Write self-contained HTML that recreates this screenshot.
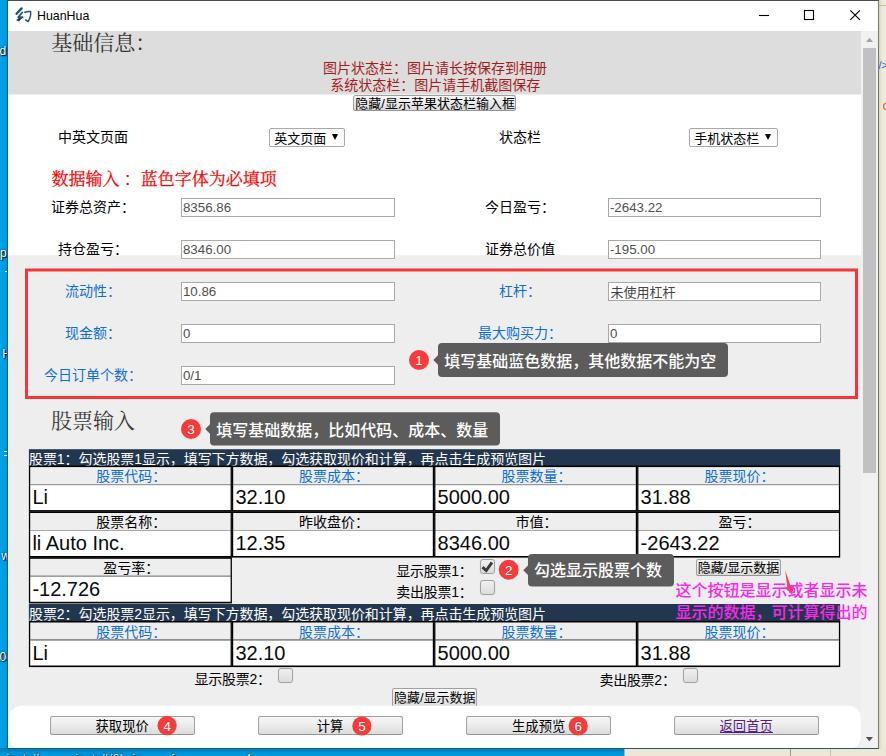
<!DOCTYPE html>
<html lang="zh-CN"><head><meta charset="utf-8"><title>HuanHua</title><style>
html,body{margin:0;padding:0;background:#009ee5}
body{width:886px;height:756px;overflow:hidden;position:relative;font-family:"Liberation Sans",sans-serif}
#page{position:absolute;left:0;top:0;width:886px;height:756px;overflow:hidden}
#page>div,#page>svg{position:absolute}
svg{display:block;overflow:visible}
svg.bar{overflow:hidden}
.title{font-size:12.4px;color:#000;line-height:14px;white-space:nowrap}
.dl{font-size:12px;color:#fff;text-shadow:1px 1px 1px #001,0 0 2px #013;white-space:nowrap;line-height:14px}
.rt{font-size:11px;line-height:12px;width:8px;overflow:hidden;white-space:nowrap}
.bl{font-size:11.5px;line-height:12px;color:#eef;white-space:nowrap;letter-spacing:.55px;text-shadow:1px 1px 1px #001,0 0 2px #013}
.btn{box-sizing:border-box;border:1px solid #a0a0a0;border-bottom-color:#949494;border-radius:2.5px;background:linear-gradient(#f7f7f7,#ececec 45%,#dcdcdc)}
.sel{box-sizing:border-box;border:1px solid #a9a9a9;border-radius:2px;background:#fff}
.inp{box-sizing:border-box;border:1px solid #a9a9a9;background:#fff;font-size:13.33px;line-height:16px;color:#505050;padding:0.7px 0 0 0.9px;white-space:nowrap;overflow:hidden}
.big{font-size:20px;line-height:23px;color:#0a0a0a;white-space:nowrap}
.cb{box-sizing:border-box;border:1px solid #a2a2a2;border-radius:3px;background:linear-gradient(#f0f0f0,#dcdcdc);box-shadow:0 0 1px rgba(0,0,0,.18)}
.bn{width:20px;text-align:center;color:#fff;font-size:12.5px;line-height:15px}
svg.t text{font-family:"Liberation Sans","Noto Sans CJK SC",sans-serif;white-space:pre}
svg.t.sf text{font-family:"Liberation Serif","Noto Serif CJK SC",serif}
svg.t.md text{font-weight:500}
</style></head><body>
<div id="page">
<div class="desk" style="left:0px;top:0px;width:886px;height:756px;background:#009ee5"></div>
<div style="left:0px;top:0px;width:8px;height:756px;background:linear-gradient(90deg,#00a2e8 0,#009de2 70%,#0088c8 100%)"></div>
<div class="dl" style="left:-0.6px;top:44px">d</div><div class="dl" style="left:0;top:245.6px">p</div><div class="dl" style="left:2.2px;top:347px">H</div><div class="dl" style="left:1.2px;top:548.8px">w</div><div class="dl" style="left:-0.4px;top:649.8px">0c</div>
<div style="left:3.5px;top:451px;width:5px;height:1.2px;background:#fff"></div>
<div style="left:3.5px;top:455px;width:5px;height:1.2px;background:#fff"></div>
<div style="left:5px;top:271px;width:3px;height:1.2px;background:#fff"></div>
<div style="left:879px;top:0px;width:7px;height:756px;background:linear-gradient(90deg,#d9d3bd 0,#ece7d6 40%,#f0ecdf 100%)"></div>
<div style="left:624px;top:749px;width:262px;height:7px;background:#ece7d6;border-left:1px solid #b5b09c"></div>
<div style="left:790px;top:749px;width:1px;height:7px;background:#9d9a8c"></div>
<div style="left:830px;top:749px;width:1px;height:7px;background:#c9c5b4"></div>
<div style="left:879px;top:5px;width:7px;height:1px;background:#c9b98a"></div>
<div class="rt" style="left:878.4px;top:59px;color:#2a62c9">/&gt;</div><div class="rt" style="left:882.6px;top:100px;color:#d9531e;font-size:13px">c</div>
<div style="left:0px;top:748px;width:624px;height:8px;background:linear-gradient(#0079b8,#0092d6 60%,#009be0)"></div>
<div class="bl" style="left:6.4px;top:751.6px">install</div><div class="bl" style="left:75.4px;top:751.6px">install(2)</div><div class="bl" style="left:132.4px;top:751.6px">in</div><div class="bl" style="left:171px;top:751.6px">f</div><div class="bl" style="left:245px;top:751.6px">4</div>
<div class="win" style="left:7px;top:0px;width:872px;height:749px;background:#fff;box-sizing:border-box;border:1px solid #5a6b75;border-top-color:#4f4f4f;border-right-color:#767676;border-left-color:#1f5f82;border-bottom-color:#23566f"></div>
<div class="titlebar" style="left:8px;top:1px;width:870px;height:30px;background:#fff"></div>
<svg class="s icon" style="left:14px;top:6px" width="20" height="18" viewBox="14 6 20 18" role="img"><title>幻</title><g fill="none" stroke-linecap="round" stroke-linejoin="round"><path d="M21.6 8.4L16.6 13.8" stroke="#17566f" stroke-width="2.3"/><path d="M22.4 12.3L18.2 17.3L22.6 17.2L17.4 20" stroke="#1b4a86" stroke-width="1.7"/><path d="M18.6 20.3L19.6 19.4" stroke="#15307a" stroke-width="2"/><path d="M24.8 12.3Q28 11.2 30.6 11.5Q31.2 15 29.6 18.6Q29 20.4 28 21.6L25.6 19.9" stroke="#1c4f94" stroke-width="1.45"/></g></svg>
<div class="title" style="left:37px;top:9.3px">HuanHua</div>
<svg class="s ctl" style="left:750px;top:5px" width="125" height="22" viewBox="750 5 125 22"><path d="M759 15.5h10" stroke="#000" stroke-width="1.1" fill="none"/><rect x="804.5" y="10.5" width="9" height="9" stroke="#000" stroke-width="1.1" fill="none"/><path d="M850.3 10.3l9.6 9.6M859.9 10.3l-9.6 9.6" stroke="#000" stroke-width="1.15" fill="none"/></svg>
<div class="content" style="left:8px;top:31px;width:853px;height:717px;background:#eeeeee"></div>
<div class="band" style="left:8px;top:31px;width:853px;height:63.6px;background:#dddddd"></div>
<svg class="s" style="left:8px;top:31px" width="853" height="717" viewBox="8 31 853 717"><rect x="8" y="31" width="853" height="63.5" fill="#dddddd"/><rect x="8" y="94.5" width="853" height="160.8" fill="#fff"/></svg>
<div class="sbar" style="left:861px;top:31px;width:17px;height:717px;background:#f1f1f1"></div>
<svg class="s" style="left:861px;top:31px" width="17" height="717" viewBox="861 31 17 717"><rect x="863" y="48" width="13" height="425" fill="#c1c1c1"/><path d="M866 42l3.5 -4.2l3.5 4.2z" fill="#a3a3a3"/><path d="M865.8 737l3.6 4.2l3.6 -4.2z" fill="#505050"/></svg>
<svg class="t sf" style="left:51px;top:30px;" width="107" height="29"><text x="0.3" y="20.1" font-size="21" fill="#333">基础信息：</text></svg>
<svg class="t" style="left:323px;top:59px;" width="226" height="20"><text x="0" y="13.97" font-size="14" fill="#a31c1c">图片状态栏：图片请长按保存到相册</text></svg>
<svg class="t" style="left:330px;top:76px;" width="212" height="20"><text x="0.2" y="13.97" font-size="14" fill="#a31c1c">系统状态栏：图片请手机截图保存</text></svg>
<div class="btn" style="left:353.3px;top:94.6px;width:162.5px;height:16.8px;"></div>
<svg class="t" style="left:355px;top:95px;" width="161" height="18"><text x="0.3" y="12.8" font-size="13" fill="#000">隐藏/显示苹果状态栏输入框</text></svg>
<svg class="t" style="left:58px;top:128px;" width="72" height="20"><text x="0.1" y="13.77" font-size="14" fill="#000">中英文页面</text></svg>
<div class="sel" style="left:269px;top:128px;width:76px;height:19px;"></div>
<svg class="t" style="left:274px;top:130px;" width="54" height="18"><text x="0.2" y="12.75" font-size="13" fill="#000">英文页面</text></svg>
<svg class="s" style="left:331px;top:132px" width="10" height="10" viewBox="331 132 10 10"><path d="M331.9 134.1h6.2l-3.1 5.8z" fill="#000"/></svg>
<svg class="t" style="left:499px;top:128px;" width="44" height="20"><text x="0.1" y="13.77" font-size="14" fill="#000">状态栏</text></svg>
<div class="sel" style="left:689px;top:128px;width:89px;height:19px;"></div>
<svg class="t" style="left:694px;top:130px;" width="67" height="18"><text x="0.2" y="12.75" font-size="13" fill="#000">手机状态栏</text></svg>
<svg class="s" style="left:764px;top:132px" width="10" height="10" viewBox="764 132 10 10"><path d="M764.9 134.1h6.2l-3.1 5.8z" fill="#000"/></svg>
<svg class="t sf" style="left:51px;top:168px;" width="228" height="24"><text x="0.6" y="16.6" font-size="17" fill="#ff0000" stroke="#ff0000" stroke-width="0.25">数据输入 ：蓝色字体为必填项</text></svg>
<svg class="t" style="left:51px;top:198px;" width="86" height="20"><text x="0.1" y="13.77" font-size="14" fill="#000">证券总资产：</text></svg>
<div class="inp" style="left:181px;top:198px;width:214px;height:18.6px;">8356.86</div>
<svg class="t" style="left:485px;top:198px;" width="72" height="20"><text x="0.1" y="13.77" font-size="14" fill="#000">今日盈亏：</text></svg>
<div class="inp" style="left:608px;top:198px;width:213px;height:18.6px;">-2643.22</div>
<svg class="t" style="left:58px;top:240px;" width="72" height="20"><text x="0.1" y="13.77" font-size="14" fill="#000">持仓盈亏：</text></svg>
<div class="inp" style="left:181px;top:240px;width:214px;height:18.6px;">8346.00</div>
<svg class="t" style="left:485px;top:240px;" width="72" height="20"><text x="0.1" y="13.77" font-size="14" fill="#000">证券总价值</text></svg>
<div class="inp" style="left:608px;top:240px;width:213px;height:18.6px;">-195.00</div>
<svg class="t" style="left:65px;top:282px;" width="58" height="20"><text x="0.1" y="13.77" font-size="14" fill="#0d6edb">流动性：</text></svg>
<div class="inp" style="left:181px;top:282px;width:214px;height:18.6px;">10.86</div>
<svg class="t" style="left:499px;top:282px;" width="44" height="20"><text x="0.1" y="13.77" font-size="14" fill="#0d6edb">杠杆：</text></svg>
<div class="inp" style="left:608px;top:282px;width:213px;height:18.6px;"></div>
<svg class="t" style="left:610px;top:284px;" width="67" height="18"><text x="0.6" y="12.65" font-size="13" fill="#444">未使用杠杆</text></svg>
<svg class="t" style="left:65px;top:324px;" width="58" height="20"><text x="0.1" y="13.77" font-size="14" fill="#0d6edb">现金额：</text></svg>
<div class="inp" style="left:181px;top:324px;width:214px;height:18.6px;">0</div>
<svg class="t" style="left:478px;top:324px;" width="86" height="20"><text x="0.1" y="13.77" font-size="14" fill="#0d6edb">最大购买力：</text></svg>
<div class="inp" style="left:608px;top:324px;width:213px;height:18.6px;">0</div>
<svg class="t" style="left:44px;top:366px;" width="100" height="20"><text x="0.1" y="13.77" font-size="14" fill="#0d6edb">今日订单个数：</text></svg>
<div class="inp" style="left:181px;top:366px;width:214px;height:18.6px;">0/1</div>
<svg class="s hl" style="left:24px;top:267px" width="836" height="134" viewBox="24 267 836 134"><rect x="26.5" y="270" width="830" height="127.5" fill="none" stroke="#f53636" stroke-width="3"/></svg>
<svg class="t sf" style="left:50px;top:407px;" width="86" height="29"><text x="0.9" y="20.5" font-size="21" fill="#3a3a3a">股票输入</text></svg>
<svg class="s nav" style="left:28px;top:448px" width="813" height="19" viewBox="28 448 813 19"><rect x="28.9" y="449.2" width="811.3" height="17.6" fill="#22374f"/></svg>
<svg class="t" style="left:29px;top:450px;" width="520" height="20"><text x="0" y="13.97" font-size="14" fill="#fff" textLength="517" lengthAdjust="spacing">股票1：勾选股票1显示，填写下方数据，勾选获取现价和计算，再点击生成预览图片</text></svg>
<svg class="s cell" style="left:27px;top:464px" width="206" height="49" viewBox="27 464 206 49"><rect x="28.9" y="465.5" width="203" height="46.2" fill="#000"/><rect x="30.2" y="467.1" width="200.4" height="17" fill="#eeeeee"/><rect x="30.2" y="484.1" width="200.4" height="1" fill="#a9a9a9"/><rect x="30.2" y="485.1" width="200.4" height="25" fill="#fff"/></svg>
<svg class="t" style="left:96px;top:468px;" width="72" height="20"><text x="0.3" y="13.47" font-size="14" fill="#0d6edb">股票代码：</text></svg>
<div class="big" style="left:32.4px;top:486.1px">Li</div>
<svg class="s cell" style="left:230px;top:464px" width="206" height="49" viewBox="230 464 206 49"><rect x="231.9" y="465.5" width="202.2" height="46.2" fill="#000"/><rect x="233.2" y="467.1" width="199.6" height="17" fill="#eeeeee"/><rect x="233.2" y="484.1" width="199.6" height="1" fill="#a9a9a9"/><rect x="233.2" y="485.1" width="199.6" height="25" fill="#fff"/></svg>
<svg class="t" style="left:298px;top:468px;" width="72" height="20"><text x="0.9" y="13.47" font-size="14" fill="#0d6edb">股票成本：</text></svg>
<div class="big" style="left:235.4px;top:486.1px">32.10</div>
<svg class="s cell" style="left:433px;top:464px" width="206" height="49" viewBox="433 464 206 49"><rect x="434.1" y="465.5" width="203" height="46.2" fill="#000"/><rect x="435.4" y="467.1" width="200.4" height="17" fill="#eeeeee"/><rect x="435.4" y="484.1" width="200.4" height="1" fill="#a9a9a9"/><rect x="435.4" y="485.1" width="200.4" height="25" fill="#fff"/></svg>
<svg class="t" style="left:501px;top:468px;" width="72" height="20"><text x="0.5" y="13.47" font-size="14" fill="#0d6edb">股票数量：</text></svg>
<div class="big" style="left:437.6px;top:486.1px">5000.00</div>
<svg class="s cell" style="left:636px;top:464px" width="206" height="49" viewBox="636 464 206 49"><rect x="637.1" y="465.5" width="203.1" height="46.2" fill="#000"/><rect x="638.4" y="467.1" width="200.5" height="17" fill="#eeeeee"/><rect x="638.4" y="484.1" width="200.5" height="1" fill="#a9a9a9"/><rect x="638.4" y="485.1" width="200.5" height="25" fill="#fff"/></svg>
<svg class="t" style="left:704px;top:468px;" width="72" height="20"><text x="0.55" y="13.47" font-size="14" fill="#0d6edb">股票现价：</text></svg>
<div class="big" style="left:640.6px;top:486.1px">31.88</div>
<svg class="s cell" style="left:27px;top:510px" width="206" height="49" viewBox="27 510 206 49"><rect x="28.9" y="511.4" width="203" height="46.2" fill="#000"/><rect x="30.2" y="513" width="200.4" height="17" fill="#eeeeee"/><rect x="30.2" y="530" width="200.4" height="1" fill="#a9a9a9"/><rect x="30.2" y="531" width="200.4" height="25" fill="#fff"/></svg>
<svg class="t" style="left:96px;top:514px;" width="72" height="20"><text x="0.3" y="13.37" font-size="14" fill="#000">股票名称：</text></svg>
<div class="big" style="left:32.4px;top:532px">li Auto Inc.</div>
<svg class="s cell" style="left:230px;top:510px" width="206" height="49" viewBox="230 510 206 49"><rect x="231.9" y="511.4" width="202.2" height="46.2" fill="#000"/><rect x="233.2" y="513" width="199.6" height="17" fill="#eeeeee"/><rect x="233.2" y="530" width="199.6" height="1" fill="#a9a9a9"/><rect x="233.2" y="531" width="199.6" height="25" fill="#fff"/></svg>
<svg class="t" style="left:298px;top:514px;" width="72" height="20"><text x="0.9" y="13.37" font-size="14" fill="#000">昨收盘价：</text></svg>
<div class="big" style="left:235.4px;top:532px">12.35</div>
<svg class="s cell" style="left:433px;top:510px" width="206" height="49" viewBox="433 510 206 49"><rect x="434.1" y="511.4" width="203" height="46.2" fill="#000"/><rect x="435.4" y="513" width="200.4" height="17" fill="#eeeeee"/><rect x="435.4" y="530" width="200.4" height="1" fill="#a9a9a9"/><rect x="435.4" y="531" width="200.4" height="25" fill="#fff"/></svg>
<svg class="t" style="left:515px;top:514px;" width="44" height="20"><text x="0.5" y="13.37" font-size="14" fill="#000">市值：</text></svg>
<div class="big" style="left:437.6px;top:532px">8346.00</div>
<svg class="s cell" style="left:636px;top:510px" width="206" height="49" viewBox="636 510 206 49"><rect x="637.1" y="511.4" width="203.1" height="46.2" fill="#000"/><rect x="638.4" y="513" width="200.5" height="17" fill="#eeeeee"/><rect x="638.4" y="530" width="200.5" height="1" fill="#a9a9a9"/><rect x="638.4" y="531" width="200.5" height="25" fill="#fff"/></svg>
<svg class="t" style="left:718px;top:514px;" width="44" height="20"><text x="0.55" y="13.37" font-size="14" fill="#000">盈亏：</text></svg>
<div class="big" style="left:640.6px;top:532px">-2643.22</div>
<svg class="s cell" style="left:27px;top:556px" width="206" height="49" viewBox="27 556 206 49"><rect x="28.9" y="557.2" width="203" height="46.2" fill="#000"/><rect x="30.2" y="558.8" width="200.4" height="17" fill="#eeeeee"/><rect x="30.2" y="575.8" width="200.4" height="1" fill="#a9a9a9"/><rect x="30.2" y="576.8" width="200.4" height="25" fill="#fff"/></svg>
<svg class="t" style="left:103px;top:559px;" width="58" height="20"><text x="0.3" y="14.17" font-size="14" fill="#000">盈亏率：</text></svg>
<div class="big" style="left:32.4px;top:577.8px">-12.726</div>
<svg class="t" style="left:396px;top:562px;" width="79" height="20"><text x="0.2" y="13.77" font-size="14" fill="#000" textLength="76.5" lengthAdjust="spacing">显示股票1：</text></svg>
<div class="cb" style="left:480px;top:559px;width:15px;height:15px;"></div>
<svg class="s" style="left:480px;top:559px" width="16" height="16" viewBox="480 559 16 16"><path d="M482.5 567.1l3.7 3.4l5.8 -8.1" fill="none" stroke="#3a3a3a" stroke-width="2.9"/></svg>
<svg class="t" style="left:396px;top:583px;" width="79" height="20"><text x="0.2" y="14.17" font-size="14" fill="#000" textLength="76.5" lengthAdjust="spacing">卖出股票1：</text></svg>
<div class="cb" style="left:480px;top:580px;width:15px;height:15px;"></div>
<div class="btn" style="left:696px;top:558.9px;width:84.8px;height:17.2px;"></div>
<svg class="t" style="left:697px;top:560px;" width="83" height="18"><text x="0.7" y="12.4" font-size="13" fill="#000">隐藏/显示数据</text></svg>
<svg class="s nav" style="left:28px;top:603px" width="813" height="19" viewBox="28 603 813 19"><rect x="28.9" y="604" width="811.3" height="18" fill="#22374f"/></svg>
<svg class="t" style="left:29px;top:605px;" width="520" height="20"><text x="0" y="13.77" font-size="14" fill="#fff" textLength="517" lengthAdjust="spacing">股票2：勾选股票2显示，填写下方数据，勾选获取现价和计算，再点击生成预览图片</text></svg>
<svg class="s cell" style="left:27px;top:619px" width="206" height="50" viewBox="27 619 206 50"><rect x="28.9" y="620.9" width="203" height="46.2" fill="#000"/><rect x="30.2" y="622.5" width="200.4" height="17" fill="#eeeeee"/><rect x="30.2" y="639.5" width="200.4" height="1" fill="#a9a9a9"/><rect x="30.2" y="640.5" width="200.4" height="25" fill="#fff"/></svg>
<svg class="t" style="left:96px;top:623px;" width="72" height="20"><text x="0.3" y="13.87" font-size="14" fill="#0d6edb">股票代码：</text></svg>
<div class="big" style="left:32.4px;top:641.5px">Li</div>
<svg class="s cell" style="left:230px;top:619px" width="206" height="50" viewBox="230 619 206 50"><rect x="231.9" y="620.9" width="202.2" height="46.2" fill="#000"/><rect x="233.2" y="622.5" width="199.6" height="17" fill="#eeeeee"/><rect x="233.2" y="639.5" width="199.6" height="1" fill="#a9a9a9"/><rect x="233.2" y="640.5" width="199.6" height="25" fill="#fff"/></svg>
<svg class="t" style="left:298px;top:623px;" width="72" height="20"><text x="0.9" y="13.87" font-size="14" fill="#0d6edb">股票成本：</text></svg>
<div class="big" style="left:235.4px;top:641.5px">32.10</div>
<svg class="s cell" style="left:433px;top:619px" width="206" height="50" viewBox="433 619 206 50"><rect x="434.1" y="620.9" width="203" height="46.2" fill="#000"/><rect x="435.4" y="622.5" width="200.4" height="17" fill="#eeeeee"/><rect x="435.4" y="639.5" width="200.4" height="1" fill="#a9a9a9"/><rect x="435.4" y="640.5" width="200.4" height="25" fill="#fff"/></svg>
<svg class="t" style="left:501px;top:623px;" width="72" height="20"><text x="0.5" y="13.87" font-size="14" fill="#0d6edb">股票数量：</text></svg>
<div class="big" style="left:437.6px;top:641.5px">5000.00</div>
<svg class="s cell" style="left:636px;top:619px" width="206" height="50" viewBox="636 619 206 50"><rect x="637.1" y="620.9" width="203.1" height="46.2" fill="#000"/><rect x="638.4" y="622.5" width="200.5" height="17" fill="#eeeeee"/><rect x="638.4" y="639.5" width="200.5" height="1" fill="#a9a9a9"/><rect x="638.4" y="640.5" width="200.5" height="25" fill="#fff"/></svg>
<svg class="t" style="left:704px;top:623px;" width="72" height="20"><text x="0.55" y="13.87" font-size="14" fill="#0d6edb">股票现价：</text></svg>
<div class="big" style="left:640.6px;top:641.5px">31.88</div>
<svg class="t" style="left:194px;top:670px;" width="79" height="20"><text x="0.5" y="14.17" font-size="14" fill="#000" textLength="76.5" lengthAdjust="spacing">显示股票2：</text></svg>
<div class="cb" style="left:278px;top:668px;width:15px;height:15px;"></div>
<svg class="t" style="left:599px;top:671px;" width="79" height="20"><text x="0.4" y="13.57" font-size="14" fill="#000" textLength="76.5" lengthAdjust="spacing">卖出股票2：</text></svg>
<div class="cb" style="left:683px;top:668px;width:15px;height:15px;"></div>
<div class="btn" style="left:392.2px;top:688.3px;width:84.8px;height:19.6px;"></div>
<svg class="t" style="left:394px;top:689px;" width="83" height="18"><text x="0" y="13" font-size="13" fill="#000">隐藏/显示数据</text></svg>
<svg class="s bar" style="left:8px;top:704px" width="854" height="44" viewBox="8 704 854 44"><rect x="9.2" y="705.8" width="851.6" height="43.4" rx="12" fill="#fff"/></svg>
<div class="btn" style="left:50px;top:716.2px;width:144.8px;height:18.4px;"></div>
<svg class="t" style="left:95px;top:718px;" width="56" height="19"><text x="0.5" y="12.8" font-size="13.33" fill="#000">获取现价</text></svg>
<div class="btn" style="left:258px;top:716.2px;width:144.6px;height:18.4px;"></div>
<svg class="t" style="left:316px;top:718px;" width="29" height="19"><text x="0.7" y="12.8" font-size="13.33" fill="#000">计算</text></svg>
<div class="btn" style="left:466.4px;top:716.2px;width:144.6px;height:18.4px;"></div>
<svg class="t" style="left:512px;top:718px;" width="56" height="19"><text x="0" y="12.8" font-size="13.33" fill="#000">生成预览</text></svg>
<div class="btn" style="left:674px;top:716.2px;width:144.9px;height:18.4px;"></div>
<svg class="t" style="left:719px;top:718px;" width="56" height="19"><text x="0.5" y="12.8" font-size="13.33" fill="#551a8b">返回首页</text></svg>
<div style="left:719.79px;top:732.2px;width:53.32px;height:1px;background:#551a8b"></div>
<svg class="s badge" style="left:408px;top:349px" width="22" height="22" viewBox="408 349 22 22"><circle cx="419" cy="360" r="10" fill="#f73a3a"/></svg>
<svg class="t md" style="left:415px;top:352px;" width="10" height="18"><text x="0.3" y="12.94" font-size="13.5" fill="#fff">1</text></svg>
<svg class="s tip" style="left:432px;top:342px" width="298" height="36" viewBox="432 342 298 36"><rect x="438" y="343" width="290" height="34" rx="4" fill="#5c5c5c"/><path d="M438.2 355l-4.9 5l4.9 5z" fill="#5c5c5c"/></svg>
<svg class="t md" style="left:444px;top:352px;" width="274" height="22"><text x="0.2" y="15.2" font-size="16" fill="#fff">填写基础蓝色数据，其他数据不能为空</text></svg>
<svg class="s badge" style="left:180px;top:418px" width="22" height="22" viewBox="180 418 22 22"><circle cx="191" cy="429" r="10" fill="#f73a3a"/></svg>
<svg class="t md" style="left:187px;top:421px;" width="10" height="18"><text x="0.3" y="12.94" font-size="13.5" fill="#fff">3</text></svg>
<svg class="s tip" style="left:204px;top:411px" width="298" height="36" viewBox="204 411 298 36"><rect x="210" y="412.3" width="290" height="33.2" rx="4" fill="#5c5c5c"/><path d="M210.2 423.9l-4.9 5l4.9 5z" fill="#5c5c5c"/></svg>
<svg class="t md" style="left:216px;top:421px;" width="274" height="22"><text x="0.2" y="15.3" font-size="16" fill="#fff">填写基础数据，比如代码、成本、数量</text></svg>
<svg class="s badge" style="left:497px;top:558px" width="23" height="23" viewBox="497 558 23 23"><circle cx="508.7" cy="569.8" r="10" fill="#f73a3a"/></svg>
<svg class="t md" style="left:505px;top:562px;" width="10" height="18"><text x="0" y="12.74" font-size="13.5" fill="#fff">2</text></svg>
<svg class="s tip" style="left:522px;top:553px" width="154" height="35" viewBox="522 553 154 35"><rect x="528" y="554" width="146" height="32.5" rx="4" fill="#5c5c5c"/><path d="M528.2 565.25l-4.9 5l4.9 5z" fill="#5c5c5c"/></svg>
<svg class="t md" style="left:534px;top:561px;" width="130" height="22"><text x="0" y="15.3" font-size="16" fill="#fff">勾选显示股票个数</text></svg>
<svg class="s badge" style="left:156px;top:715px" width="22" height="22" viewBox="156 715 22 22"><circle cx="167.1" cy="725.6" r="9.6" fill="#f73a3a"/></svg>
<svg class="t md" style="left:163px;top:718px;" width="10" height="18"><text x="0.4" y="12.54" font-size="13.5" fill="#fff">4</text></svg>
<svg class="s badge" style="left:351px;top:715px" width="22" height="22" viewBox="351 715 22 22"><circle cx="361.9" cy="726" r="9.6" fill="#f73a3a"/></svg>
<svg class="t md" style="left:358px;top:718px;" width="10" height="18"><text x="0.2" y="12.94" font-size="13.5" fill="#fff">5</text></svg>
<svg class="s badge" style="left:567px;top:715px" width="22" height="22" viewBox="567 715 22 22"><circle cx="578.2" cy="726" r="9.6" fill="#f73a3a"/></svg>
<svg class="t md" style="left:574px;top:718px;" width="10" height="18"><text x="0.5" y="12.94" font-size="13.5" fill="#fff">6</text></svg>
<svg class="s arrow" style="left:780px;top:566px" width="18" height="32" viewBox="780 566 18 32"><path d="M785.2 570.2L790.6 586.2L794 585.8L792 594.4L783.6 586.4L787.4 587.4z" fill="#f93c3c"/></svg>
<svg class="t md" style="left:675px;top:581px;" width="194" height="22"><text x="0.4" y="15.4" font-size="16" fill="#fb28ee">这个按钮是显示或者显示未</text></svg>
<svg class="t md" style="left:675px;top:603px;" width="194" height="22"><text x="0.4" y="15.2" font-size="16" fill="#fb28ee">显示的数据，可计算得出的</text></svg>
</div>
</body></html>
